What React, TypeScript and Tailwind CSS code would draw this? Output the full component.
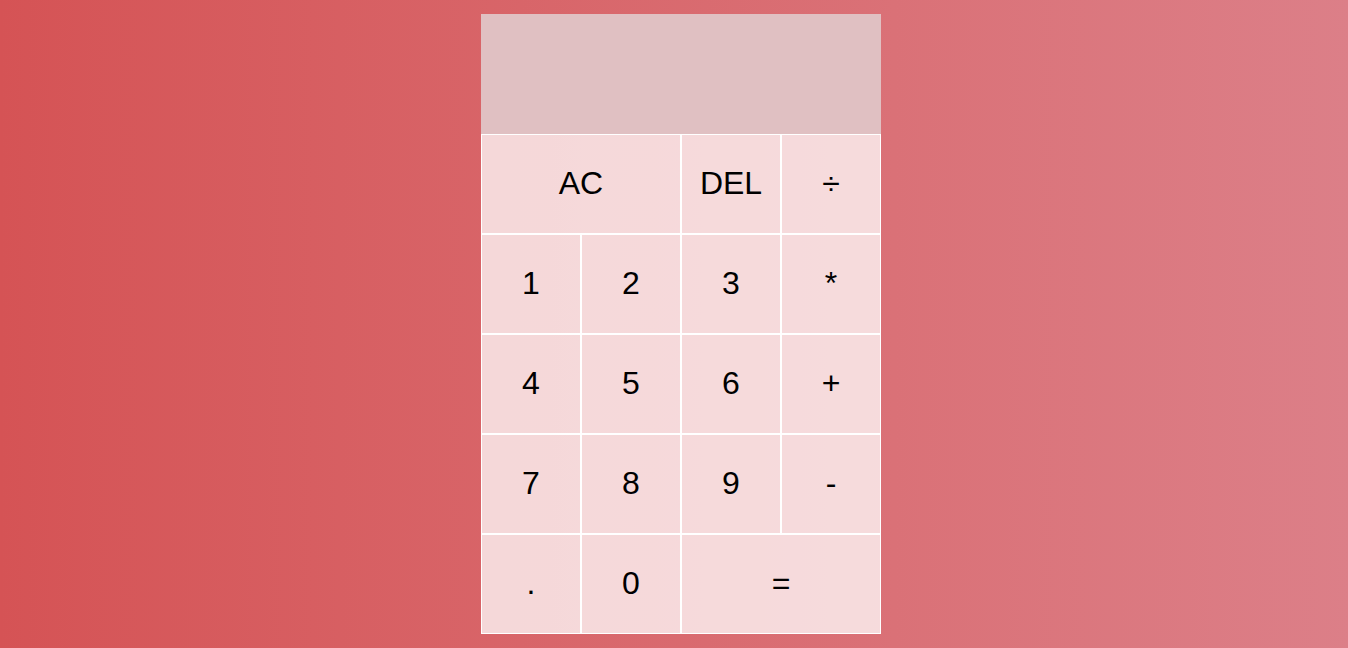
const KEYS: { label: string; wide?: boolean }[] = [
  { label: 'AC', wide: true },
  { label: 'DEL' },
  { label: '÷' },
  { label: '1' },
  { label: '2' },
  { label: '3' },
  { label: '*' },
  { label: '4' },
  { label: '5' },
  { label: '6' },
  { label: '+' },
  { label: '7' },
  { label: '8' },
  { label: '9' },
  { label: '-' },
  { label: '.' },
  { label: '0' },
  { label: '=', wide: true },
];

export default function App() {
  return (
    <div className="min-h-screen w-full bg-gradient-to-r from-[#d55355] to-[#dc7f88] flex items-center justify-center pl-[14px] font-['Liberation_Sans',Arial,sans-serif]">
      <div className="grid grid-cols-[repeat(4,100px)] grid-rows-[120px_repeat(5,100px)]">
        <div className="col-span-4 bg-[#e0c0c2]" />
        {KEYS.map((k) => (
          <button
            key={k.label}
            className={`${k.wide ? 'col-span-2' : ''} border border-white bg-white/75 text-[32px] text-black pb-[3px] cursor-pointer outline-none`}
          >
            {k.label}
          </button>
        ))}
      </div>
    </div>
  );
}
